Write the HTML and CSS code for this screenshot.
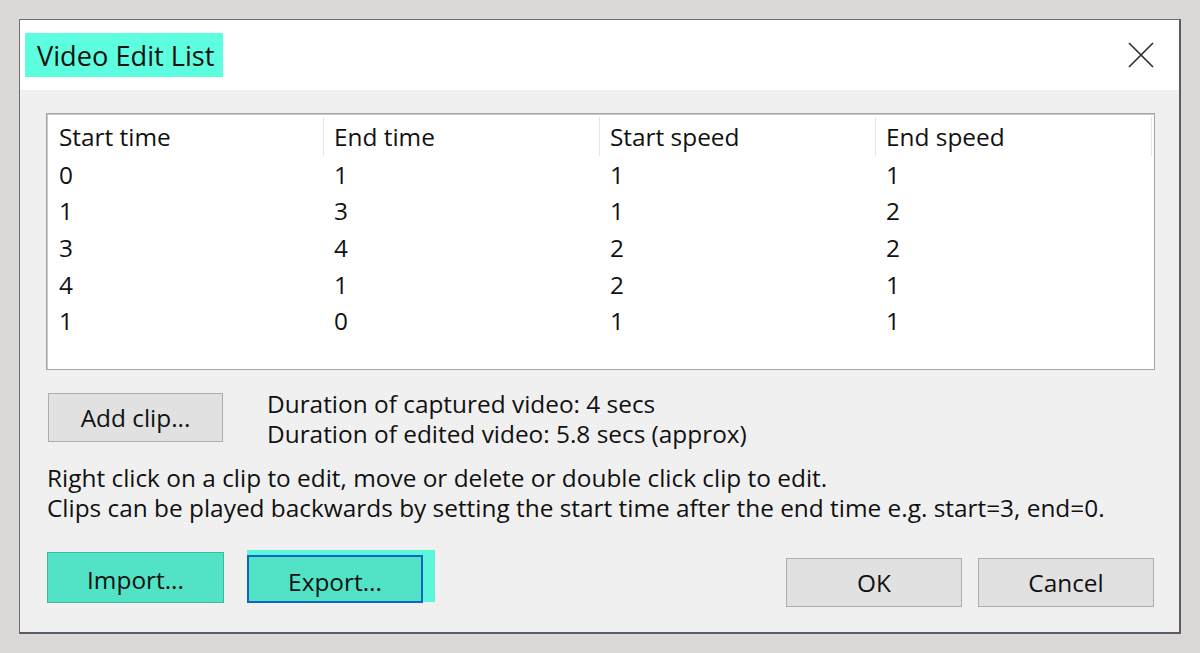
FILE: index.html
```html
<!DOCTYPE html>
<html>
<head>
<meta charset="utf-8">
<link rel="stylesheet" href="styles.css">
</head>
<body>
<div class="dialog">
  <div class="titlebar">
    <div class="title">Video Edit List</div>
    <div class="close">
      <svg width="26" height="26" viewBox="0 0 26 26"><path d="M1 1 L25 25 M25 1 L1 25" stroke="#2b2b2b" stroke-width="1.6" fill="none"/></svg>
    </div>
  </div>
  <div class="body">
    <div class="list">
      <div class="row head">
        <div class="cell">Start time</div>
        <div class="cell">End time</div>
        <div class="cell">Start speed</div>
        <div class="cell">End speed</div>
      </div>
      <div class="row"><div class="cell">0</div><div class="cell">1</div><div class="cell">1</div><div class="cell">1</div></div>
      <div class="row"><div class="cell">1</div><div class="cell">3</div><div class="cell">1</div><div class="cell">2</div></div>
      <div class="row"><div class="cell">3</div><div class="cell">4</div><div class="cell">2</div><div class="cell">2</div></div>
      <div class="row"><div class="cell">4</div><div class="cell">1</div><div class="cell">2</div><div class="cell">1</div></div>
      <div class="row"><div class="cell">1</div><div class="cell">0</div><div class="cell">1</div><div class="cell">1</div></div>
    </div>
    <div class="mid">
      <button class="btn add">Add clip...</button>
      <div class="durations">
        <div>Duration of captured video: 4 secs</div>
        <div>Duration of edited video: 5.8 secs (approx)</div>
      </div>
    </div>
    <div class="info">
      <div>Right click on a clip to edit, move or delete or double click clip to edit.</div>
      <div>Clips can be played backwards by setting the start time after the end time e.g. start=3, end=0.</div>
    </div>
    <div class="footer">
      <div class="left-btns">
        <button class="btn teal import">Import...</button>
        <div class="export-wrap"><button class="btn teal export">Export...</button></div>
      </div>
      <div class="right-btns">
        <button class="btn std">OK</button>
        <button class="btn std">Cancel</button>
      </div>
    </div>
  </div>
</div>
</body>
</html>
```

FILE: styles.css
```css
html, body {
  margin: 0;
  padding: 0;
}
body {
  background: #dcd8d7;
  width: 1200px;
  height: 653px;
  overflow: hidden;
  font-family: "Open Sans", "Noto Sans", sans-serif;
  font-size: 24.4px;
  color: #111;
}
.dialog {
  margin: 19px 0 0 19px;
  width: 1159px;
  height: 612px;
  border: 1px solid #6d6d75;
  border-right: 2px solid #5a5a66;
  border-bottom: 2px solid #5a5a66;
  background: #f0f0f0;
  display: flex;
  flex-direction: column;
}
.titlebar {
  height: 70px;
  background: #fff;
  display: flex;
  align-items: flex-start;
  justify-content: space-between;
}
.title {
  margin: 13px 0 0 5px;
  height: 44px;
  width: 198px;
  box-sizing: border-box;
  padding-left: 12px;
  background: #5dfddf;
  font-size: 27.2px;
  line-height: 45px;
  white-space: nowrap;
}
.close {
  margin: 22px 25px 0 0;
  width: 26px;
  height: 26px;
}
.close svg {
  display: block;
}
.body {
  padding: 23px 0 0 26px;
  display: flex;
  flex-direction: column;
}
.list {
  width: 1107px;
  height: 255px;
  background: #fff;
  border: 1px solid #9fa3aa;
  box-shadow: inset 1px 1px 0 #c8cbd0;
}
.row {
  display: flex;
  height: 36.6px;
  align-items: center;
}
.row.head {
  height: 42px;
  margin-top: 0;
}
.cell {
  width: 276px;
  box-sizing: border-box;
  padding-left: 10px;
  white-space: nowrap;
}
.cell:first-child {
  width: 277px;
  padding-left: 12px;
}
.head .cell {
  height: 39px;
  line-height: 39px;
  margin-top: 2px;
  border-right: 1px solid #e5e5e5;
}
.mid {
  display: flex;
  margin-top: 23px;
  align-items: flex-start;
}
.btn {
  font-family: inherit;
  font-size: 24.4px;
  color: #111;
  padding: 0;
  box-sizing: border-box;
  cursor: default;
}
.add, .std {
  background: #e1e1e1;
  border: 1px solid #adadad;
}
.add {
  margin-left: 2px;
  width: 175px;
  height: 49px;
}
.durations {
  margin-left: 44px;
  margin-top: -4px;
  line-height: 30px;
}
.info {
  margin-top: 14px;
  margin-left: 1px;
  line-height: 30px;
}
.footer {
  display: flex;
  justify-content: space-between;
  margin-top: 27px;
  width: 1108px;
}
.left-btns {
  display: flex;
  align-items: flex-start;
  margin-left: 1px;
}
.teal {
  background: #52e3c6;
  padding-top: 4px;
}
.import {
  width: 177px;
  height: 51px;
  margin-top: 2px;
  border: 1px solid #3fb89e;
}
.export-wrap {
  margin-left: 23px;
  background: #5cf6d9;
  padding: 5px 12px 0 0;
  height: 52px;
  box-sizing: border-box;
}
.export {
  width: 176px;
  height: 48px;
  border: 2px solid #0b66c4;
}
.right-btns {
  display: flex;
  gap: 16px;
  margin-top: 8px;
}
.std {
  width: 176px;
  height: 49px;
}
```
